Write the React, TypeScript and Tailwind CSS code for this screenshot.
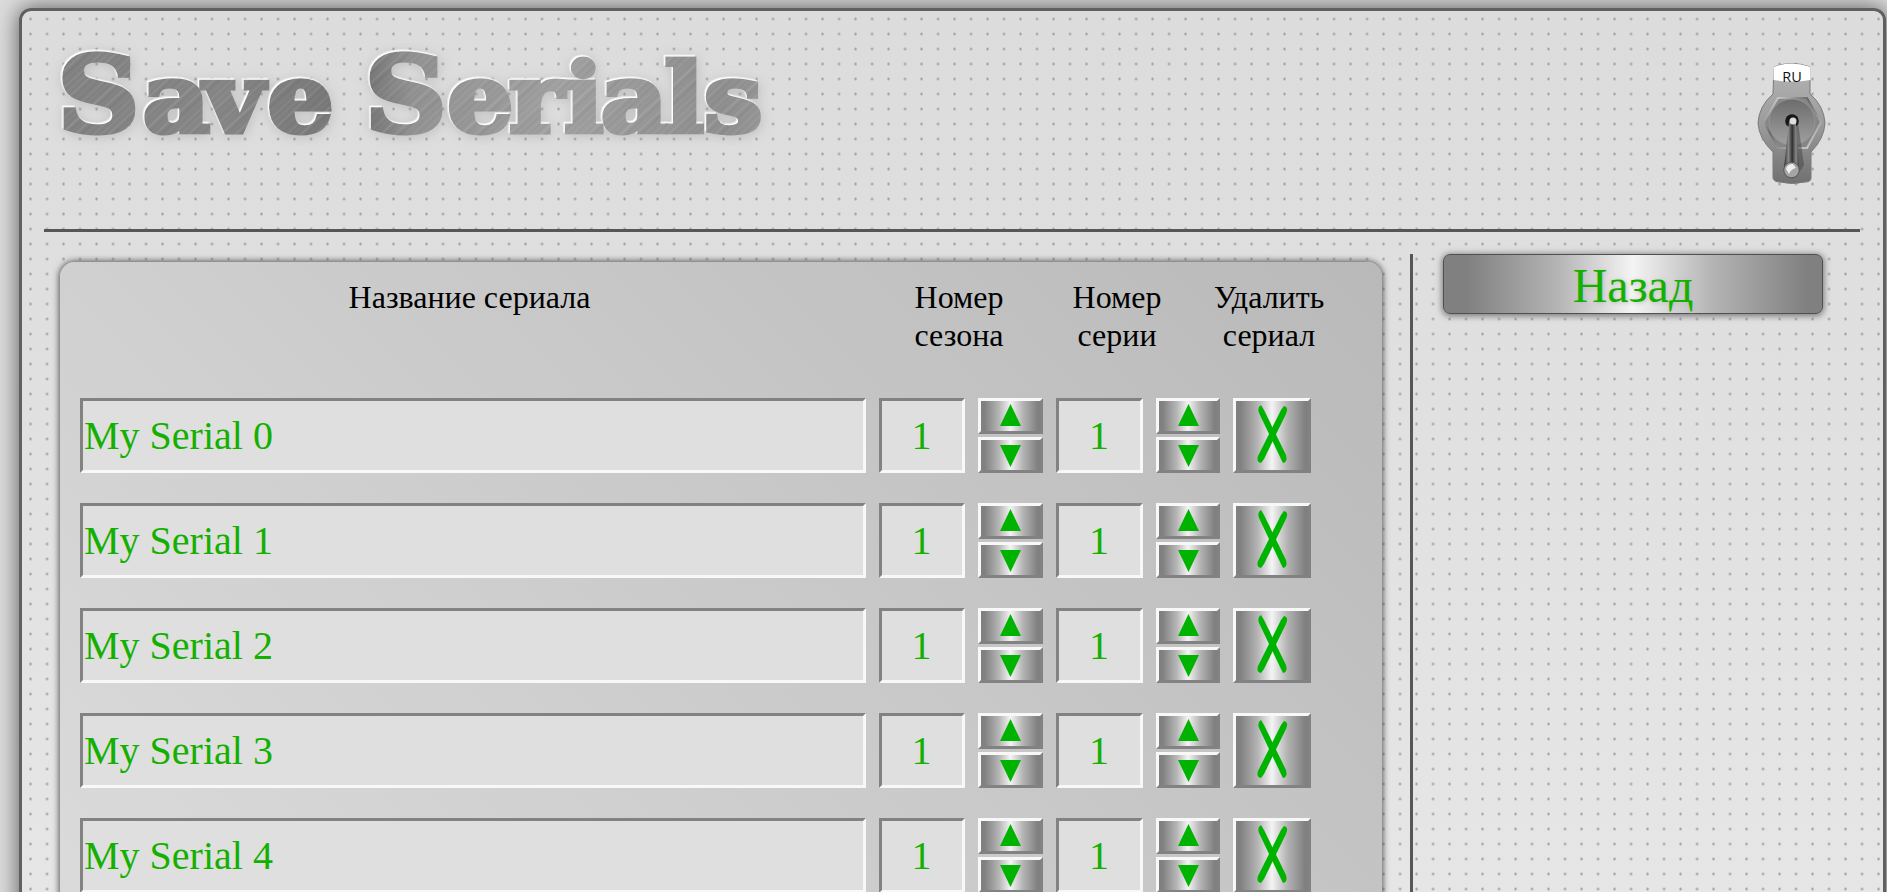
import React from 'react';

const serials = [0, 1, 2, 3, 4];
const METAL = 'bg-[linear-gradient(90deg,#808080_6%,#b4b4b4_30%,#f4f4f4_50%,#b4b4b4_71%,#808080_96%)]';
const RAISED = 'border-[3px] border-t-[#f8f8f8] border-l-[#f8f8f8] border-r-[#828282] border-b-[#828282]';
const SUNK = 'border-[3px] border-t-[#828282] border-l-[#828282] border-r-[#f8f8f8] border-b-[#f8f8f8] bg-[#dfdfdf] text-[40px] leading-[69px] text-[#14b000]';

function Stepper({ className }: { className: string }) {
  return (
    <div className={`flex h-[75px] flex-col justify-between ${className}`}>
      {['M0 22L10.5 0L21 22Z', 'M0 0L21 0L10.5 22Z'].map((d, i) => (
        <button key={d} className={`flex h-9 w-full justify-center ${i === 0 ? 'pt-[3px]' : 'pt-[5px]'} ${RAISED} ${METAL}`}>
          <svg width="21" height="22" viewBox="0 0 21 22"><path d={d} fill="#00b300" /></svg>
        </button>
      ))}
    </div>
  );
}

const streaks = Array.from({ length: 240 }, (_, i) => ({
  x: i * 3.7 - 120 + ((i * 37) % 5),
  light: i % 2 === 0,
  w: 0.7 + ((i * 13) % 4) * 0.5,
}));

function Logo() {
  return (
    <svg width="740" height="150" viewBox="0 0 740 150" className="font-['DejaVu_Serif'] font-bold">
      <defs>
        <linearGradient id="steel" x1="0" x2="1" y1="0" y2="0">
          <stop offset="0" stopColor="#828282" /><stop offset=".22" stopColor="#868686" /><stop offset=".4" stopColor="#747474" />
          <stop offset=".46" stopColor="#929292" /><stop offset=".65" stopColor="#a0a0a0" />
          <stop offset=".85" stopColor="#8f8f8f" /><stop offset="1" stopColor="#a4a4a4" />
        </linearGradient>
        <pattern id="brushed" width="740" height="150" patternUnits="userSpaceOnUse">
          <rect width="740" height="150" fill="url(#steel)" />
          {streaks.map((s, i) => (
            <path key={i} d={`M${s.x} 150L${s.x + 135} 15`} stroke={s.light ? '#fff' : '#222'} strokeWidth={s.w} opacity={s.light ? 0.11 : 0.07} />
          ))}
        </pattern>
        <filter id="emboss" x="-5%" y="-20%" width="110%" height="140%">
          <feDropShadow dx="-1.3" dy="-1.5" stdDeviation="0.4" floodColor="#fff" result="a" />
          <feDropShadow in="a" dx="1" dy="2" stdDeviation="6" floodColor="#888" floodOpacity=".35" />
        </filter>
      </defs>
      <text y="110" transform="scale(1.08 1)" fill="url(#brushed)" stroke="url(#brushed)" strokeWidth="5" filter="url(#emboss)">
        <tspan x="12.5" fontSize="105">S</tspan><tspan x="91.5 148 207" fontSize="96">ave</tspan>
        <tspan fontSize="96"> </tspan>
        <tspan x="297" fontSize="105">S</tspan><tspan x="373.5 430.5 481.5 515.500 574.5 611" fontSize="96">erials</tspan>
      </text>
    </svg>
  );
}

function Toggle() {
  return (
    <svg width="72" height="124" viewBox="0 0 72 124" className="font-['Open_Sans']">
      <defs>
        <linearGradient id="plate" x1="0" x2="0" y1="0" y2="1"><stop offset="0" stopColor="#b4b4b4" /><stop offset=".5" stopColor="#9c9c9c" /><stop offset="1" stopColor="#707070" /></linearGradient>
        <linearGradient id="disc" x1="0" x2="0" y1="0" y2="1"><stop offset="0" stopColor="#6c6c6c" /><stop offset="1" stopColor="#a0a0a0" /></linearGradient>
        <linearGradient id="lever"><stop offset="0" stopColor="#333" /><stop offset=".3" stopColor="#888" /><stop offset=".55" stopColor="#303030" /><stop offset=".8" stopColor="#888" /><stop offset="1" stopColor="#444" /></linearGradient>
        <linearGradient id="hexedge" x1="0" x2="1" y1="0" y2="1"><stop offset="0" stopColor="#eee" /><stop offset=".4" stopColor="#666" /><stop offset="1" stopColor="#ddd" /></linearGradient>
      </defs>
      <path d="M18 6Q36 -1 54 6V33Q68 45 69 62Q68 78 55 91V117Q55 121 49 121Q36 124 24 121Q18 121 17 117V91Q3 78 2 62Q3 45 17 33Z" fill="url(#plate)" stroke="#787884" />
      <path d="M17.500 6Q36 -1 54.500 6V19Q36 22 17.500 19Z" fill="#fff" />
      <text x="36" y="20.500" fontSize="14.500" textAnchor="middle" fill="#111">RU</text>
      <path d="M22 37H51L65 61L51 87H22L8 61Z" fill="#868686" stroke="url(#hexedge)" strokeWidth="2" />
      <circle cx="36" cy="61" r="23" fill="url(#disc)" stroke="#999" strokeWidth=".7" />
      <path d="M42 62L48 104Q44 112 40 112L34 62Z" fill="#444" opacity=".5" />
      <circle cx="36" cy="60" r="6.800" fill="#171717" />
      <path d="M33 61Q36 57 40 61L43 106Q35 113 28 106Z" fill="url(#lever)" />
      <circle cx="37" cy="60" r="3.500" fill="#ddd" />
      <circle cx="35.500" cy="109" r="7.800" fill="#a4a4a4" stroke="#555" />
      <path d="M30 108Q31 103 37 103L40 107Q35 108 33 113Z" fill="#eee" />
    </svg>
  );
}

export default function App() {
  return (
    <div className="h-[892px] overflow-hidden bg-[#dcdcdc] pt-2 pl-[19px] font-['Liberation_Serif',serif]">
      <main className="h-[1100px] w-[1867px] rounded-[12px] border-[3px] border-[#606060] bg-[radial-gradient(circle,#9c9c9c_0.8px,transparent_1.6px),linear-gradient(#dcdcdc,#e6e6e6_900px)] bg-[length:16.5px_15px,100%_100%] bg-[position:0.3px_0.5px,0_0] pr-[23px] pl-[22px] shadow-[0_0_22px_#555]">
        <header className="flex h-[221px] justify-between border-b-[3px] border-[#565656] pt-[11px]">
          <Logo />
          <div className="pt-[39px] pr-[32px]"><Toggle /></div>
        </header>
        <div className="flex pt-[23px]">
          <section className="mt-[7px] ml-4 h-[900px] w-[1322px] shrink-0 rounded-t-[15px] bg-[linear-gradient(225deg,#b9b9b9,#dadada_1350px)] pl-5 shadow-[0_0_6px_1px_#555]">
            <div className="flex pt-4 text-center text-[32px] leading-[38px] text-black">
              <div className="w-[779px]">Название сериала</div>
              <div className="ml-[40px] w-[120px]">Номер<br />сезона</div>
              <div className="ml-[38px] w-[120px]">Номер<br />серии</div>
              <div className="ml-[32px] w-[120px]">Удалить<br />сериал</div>
            </div>
            <div className="mt-11 flex flex-col gap-[30px]">
              {serials.map((n) => (
                <div key={n} className="flex h-[75px]">
                  <div className={`w-[786px] pl-px ${SUNK}`}>My Serial {n}</div>
                  <div className={`ml-[13px] w-[86px] pr-px text-center ${SUNK}`}>1</div>
                  <Stepper className="ml-[13px] w-[65px]" />
                  <div className={`ml-[13px] w-[87px] pr-px text-center ${SUNK}`}>1</div>
                  <Stepper className="ml-[13px] w-16" />
                  <button className={`ml-[13px] h-[75px] w-[78px] ${RAISED} ${METAL}`}>
                    <svg width="72" height="69" viewBox="1 1 72 69" fill="#00b300">
                      <path d="M26 5L29 10L51 55Q53 62 48 63L46 59L24 13Q22 7 26 5Z" />
                      <path d="M49 6L46 10L23 56Q21 62 26 63L29 59L51 14Q54 7 49 6Z" />
                    </svg>
                  </button>
                </div>
              ))}
            </div>
          </section>
          <aside className="-mt-px ml-7 h-[900px] border-l-[3px] border-[#565656] pl-[30px]">
            <button className={`block h-[60px] w-[380px] rounded-[7px] border border-[#505050] text-[48px] leading-[61px] text-[#14b000] shadow-[0_1px_6px_1px_#777] text-shadow-[1px_1px_4px_#bbb] ${METAL}`}>Назад</button>
          </aside>
        </div>
      </main>
    </div>
  );
}
